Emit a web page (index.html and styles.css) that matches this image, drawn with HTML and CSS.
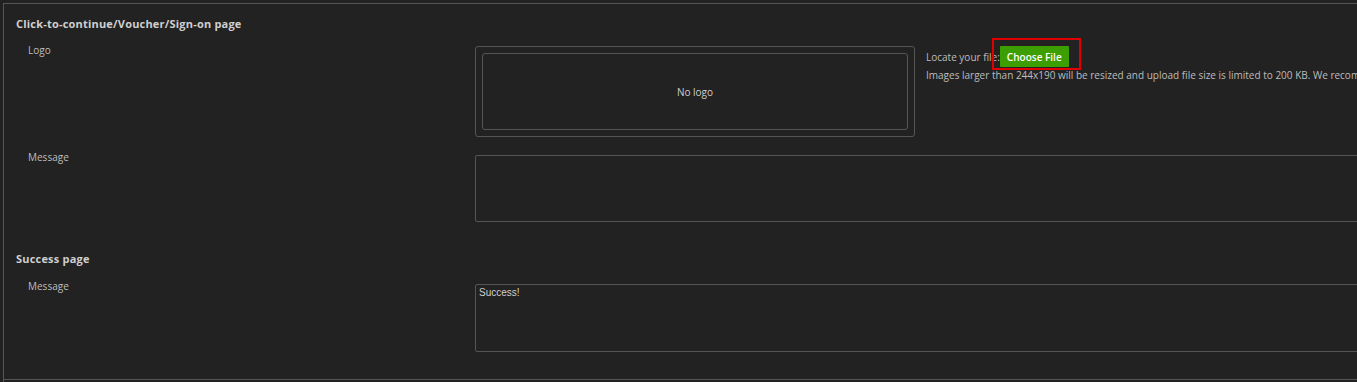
FILE: index.html
```html
<!DOCTYPE html>
<html lang="en">
<head>
    <meta charset="UTF-8">
    <meta name="viewport" content="width=device-width, initial-scale=1.0">
    <title>Portal customization</title>
    <link rel="stylesheet" href="styles.css">
</head>
<body>
    <div class="panel">
        <div class="section">
            <h3 class="section-title">Click-to-continue/Voucher/Sign-on page</h3>

            <div class="row row-logo">
                <div class="row-label">Logo</div>
                <div class="row-field">
                    <div class="logo-box">
                        <div class="logo-inner">No logo</div>
                    </div>
                    <div class="logo-upload">
                        <div class="upload-line">
                            <span>Locate your file:</span>
                            <span class="file-pick">
                                <button type="button" class="btn-file">Choose File</button>
                                <span class="highlight"></span>
                            </span>
                        </div>
                        <div class="upload-hint">Images larger than 244x190 will be resized and upload file size is limited to 200 KB. We recommend using a PNG or JPG image.</div>
                    </div>
                </div>
            </div>

            <div class="row row-message">
                <div class="row-label">Message</div>
                <div class="row-field">
                    <textarea class="msg-input"></textarea>
                </div>
            </div>

            <h3 class="section-title title-success">Success page</h3>

            <div class="row row-success">
                <div class="row-label">Message</div>
                <div class="row-field">
                    <textarea class="msg-input">Success!</textarea>
                </div>
            </div>
        </div>
    </div>
</body>
</html>
```

FILE: styles.css
```css
body {
    margin: 0;
    background-color: #222222;
    color: #c8c8c8;
    font-family: 'Open Sans', 'Liberation Sans', sans-serif;
    overflow: hidden;
    height: 382px;
}

.panel {
    margin: 3px 0 0 3px;
    border-top: 1px solid #555;
    border-left: 1px solid #555;
    height: 400px;
}

.section {
    padding: 0 0 27px 12px;
    border-bottom: 1px solid #555;
}

.section-title {
    margin: 13px 0 0 0;
    font-size: 11px;
    line-height: 14px;
    font-weight: bold;
    letter-spacing: 0.2px;
    color: #cfcfcf;
}

.title-success {
    margin-top: 30px;
}

.row {
    display: flex;
    align-items: flex-start;
    margin-top: 15px;
}

.row-message,
.row-success {
    margin-top: 18px;
}

.row-label {
    flex: 0 0 459px;
    padding-left: 12px;
    box-sizing: border-box;
    margin-top: -3px;
    font-size: 10px;
    line-height: 14px;
    color: #bdbdbd;
}

.row-message .row-label,
.row-success .row-label {
    margin-top: -5px;
}

.row-field {
    display: flex;
    align-items: flex-start;
    flex: 0 0 1000px;
}

.logo-box {
    flex: 0 0 auto;
    width: 440px;
    height: 91px;
    padding: 6px;
    border: 1px solid #555;
    border-radius: 3px;
    box-sizing: border-box;
}

.logo-inner {
    height: 100%;
    box-sizing: border-box;
    border: 1px solid #555;
    border-radius: 3px;
    display: flex;
    align-items: center;
    justify-content: center;
    font-size: 10px;
    color: #cfcfcf;
}

.logo-upload {
    padding-left: 11px;
    white-space: nowrap;
    font-size: 10px;
    color: #bdbdbd;
}

.upload-line {
    display: flex;
    align-items: center;
    height: 21px;
}

.file-pick {
    position: relative;
    display: inline-block;
}

.btn-file {
    display: block;
    height: 21px;
    padding: 0 7px;
    border: none;
    border-radius: 1px;
    background-color: #3c9e00;
    color: #ffffff;
    font-family: 'Open Sans', 'Liberation Sans', sans-serif;
    font-size: 10px;
    font-weight: 600;
}

.highlight {
    position: absolute;
    left: -8px;
    top: -8px;
    right: -12px;
    bottom: -3px;
    border: 2px solid #e00000;
}

.upload-hint {
    margin-top: 1px;
    line-height: 14px;
}

.msg-input {
    display: block;
    width: 1000px;
    height: 67px;
    box-sizing: border-box;
    margin: 0;
    padding: 2px 3px;
    background: transparent;
    border: 1px solid #555;
    border-radius: 2px;
    color: #d0d0d0;
    font-family: 'Liberation Sans', Arial, sans-serif;
    font-size: 10px;
    resize: none;
}

.row-success .msg-input {
    height: 68px;
}
```
